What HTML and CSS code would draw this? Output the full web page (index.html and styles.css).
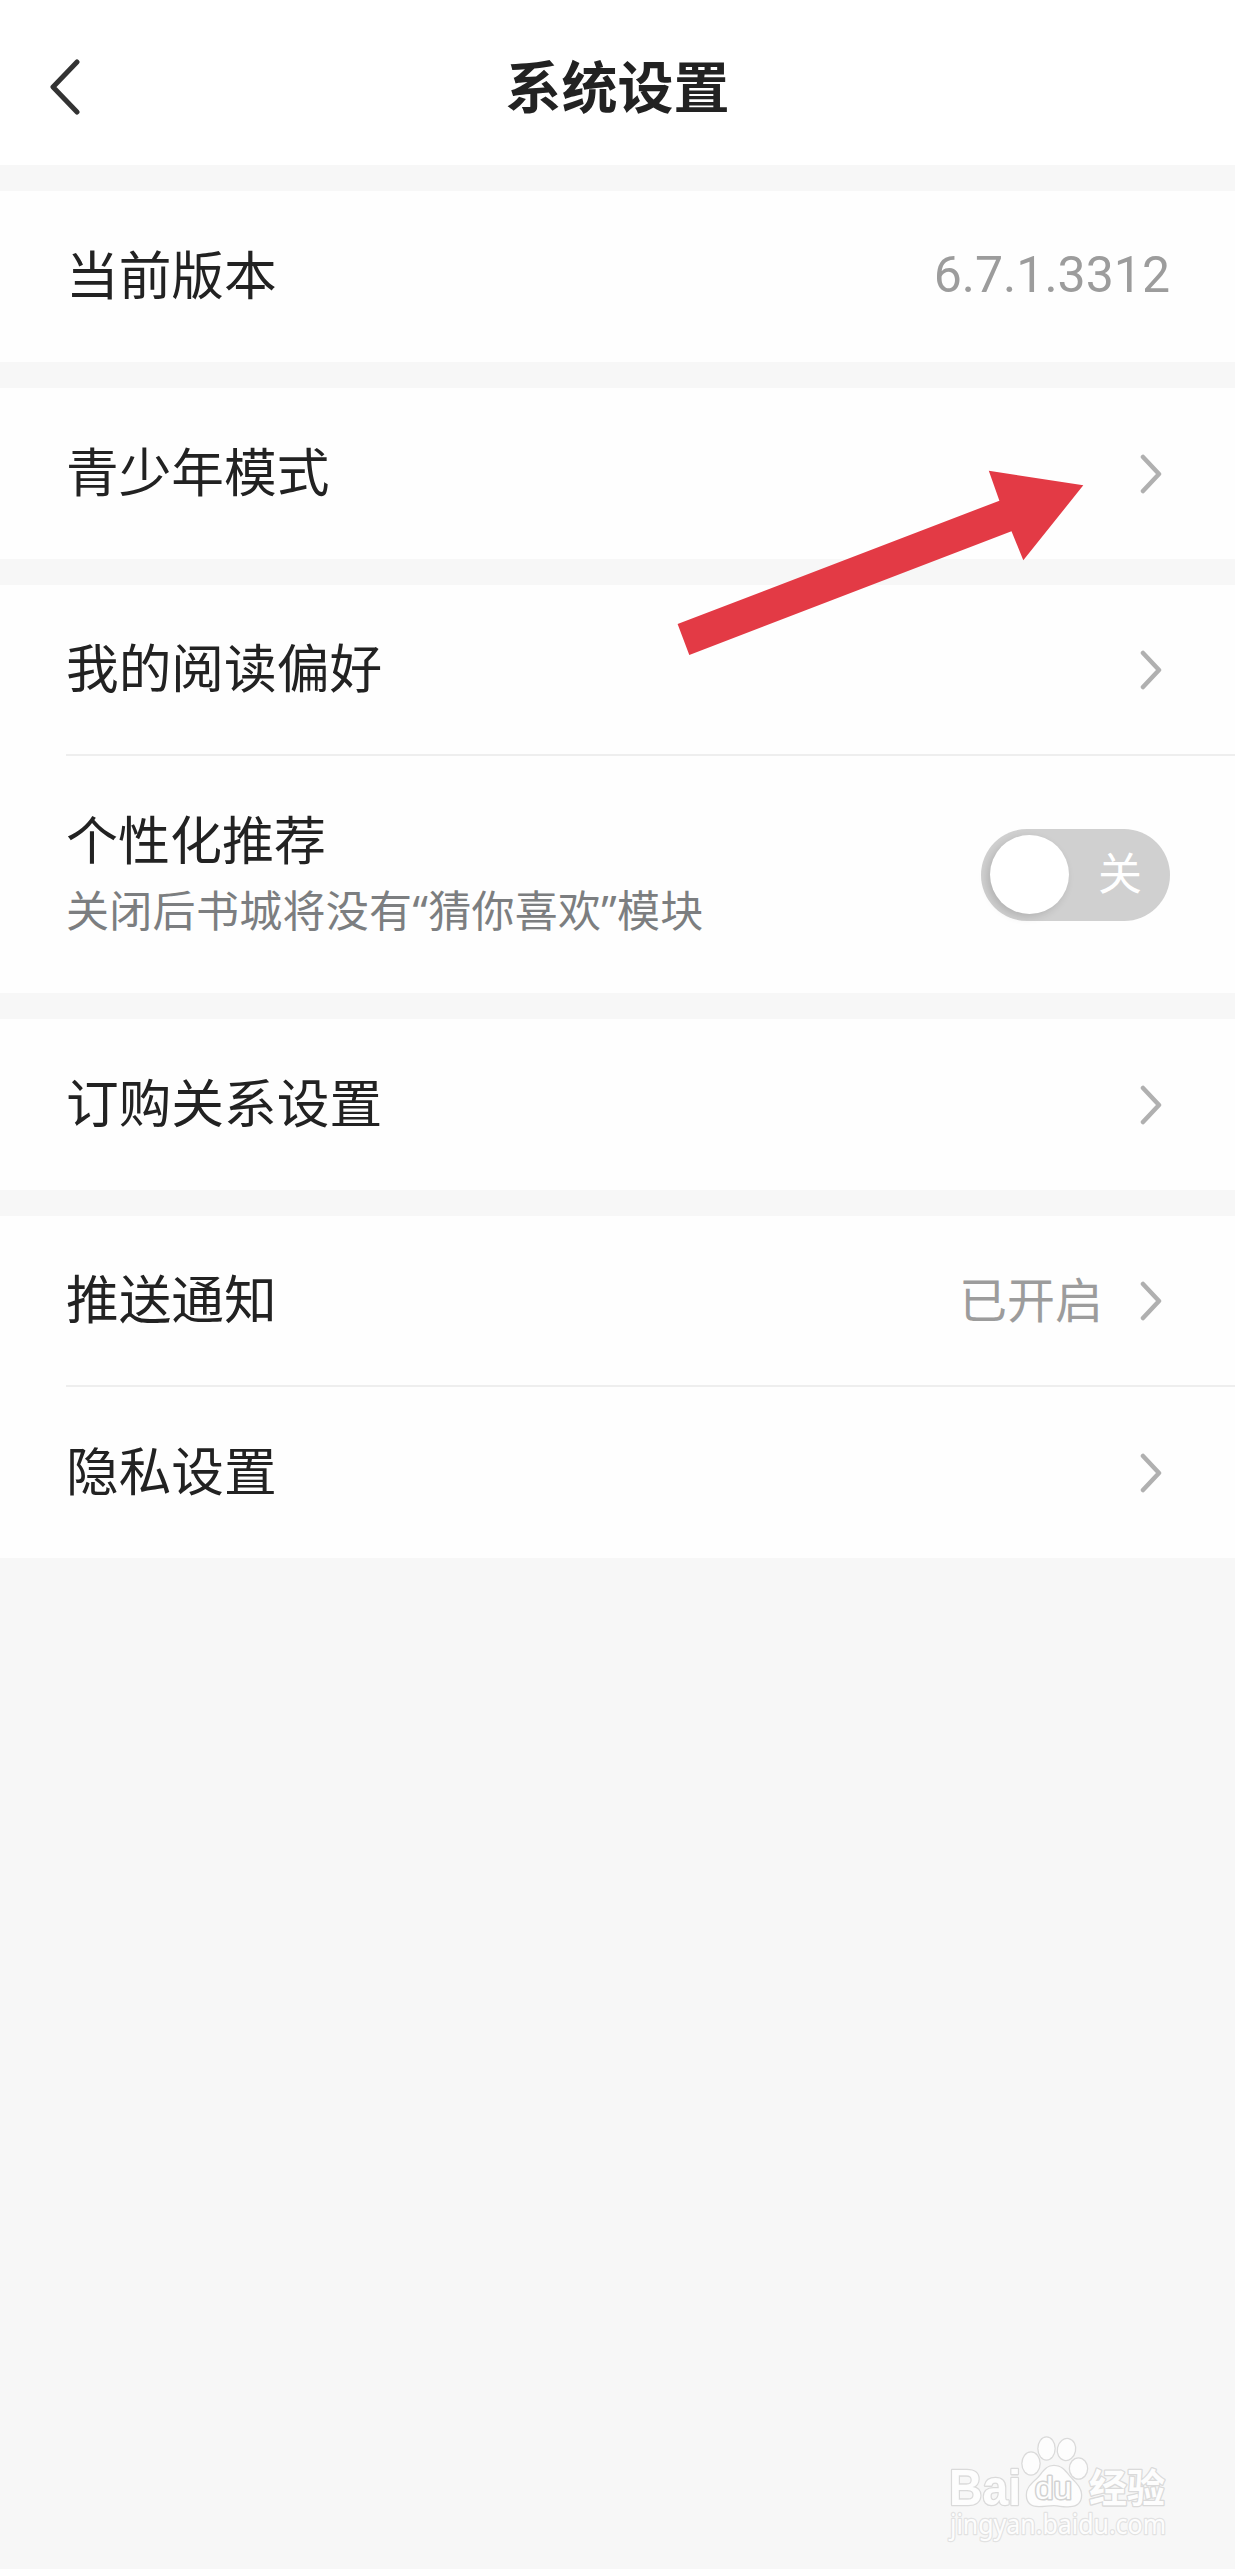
FILE: index.html
```html
<!DOCTYPE html>
<html lang="zh-CN">
<head>
<meta charset="utf-8">
<title>系统设置</title>
<link rel="stylesheet" href="styles.css">
</head>
<body>
<svg class="symbols" aria-hidden="true">
  <symbol id="chevron" viewBox="0 0 24 40"><path d="M5 3 21 20 5 37"/></symbol>
</svg>
<main class="screen">
  <header class="header">
    <svg class="back" viewBox="0 0 32 56"><path d="M29 3 5 28 29 53"/></svg>
    <h1 class="title">系统设置</h1>
  </header>

  <section class="group">
    <div class="row"><span class="label">当前版本</span><span class="version">6.7.1.3312</span></div>
  </section>

  <section class="group">
    <div class="row"><span class="label">青少年模式</span><svg class="chevron"><use href="#chevron"/></svg></div>
  </section>

  <section class="group">
    <div class="row row-first"><span class="label">我的阅读偏好</span><svg class="chevron"><use href="#chevron"/></svg></div>
    <div class="row row-tall">
      <div class="copy">
        <span class="label label-compact">个性化推荐</span>
        <span class="hint">关闭后书城将没有“猜你喜欢”模块</span>
      </div>
      <div class="toggle"><span class="knob"></span><span class="state">关</span></div>
    </div>
  </section>

  <section class="group">
    <div class="row"><span class="label">订购关系设置</span><svg class="chevron"><use href="#chevron"/></svg></div>
  </section>

  <section class="group">
    <div class="row row-first"><span class="label">推送通知</span><span class="status">已开启</span><svg class="chevron"><use href="#chevron"/></svg></div>
    <div class="row row-last"><span class="label">隐私设置</span><svg class="chevron"><use href="#chevron"/></svg></div>
  </section>

  <svg class="pointer" viewBox="677 470 407 186"><path d="M677.6 624 999.4 500.7 988.8 470.7 1083.3 485.3 1023.3 560.3 1011.5 531.3 689.3 655Z"/></svg>

  <svg class="watermark" viewBox="0 0 240 130">
    <g class="mark">
      <text class="brand" x="9" y="70.500" textLength="72" lengthAdjust="spacingAndGlyphs">Bai</text>
      <ellipse cx="91" cy="29.500" rx="8.500" ry="11"/>
      <ellipse cx="106.500" cy="14.500" rx="8" ry="11"/>
      <ellipse cx="126.500" cy="15.500" rx="8.500" ry="10.500" transform="rotate(12 126.500 15.500)"/>
      <ellipse cx="138.500" cy="34.500" rx="8.500" ry="10"/>
      <path d="M114 32C107 32 104 37 100 42 95 48 87 52 87 61 87 69 92 72 99 72 105 72 108 71 114 71 120 71 123 73 130 72 137 72 141 68 141 61 141 53 134 48 129 42 124 36 121 32 114 32Z"/>
      <text class="du" x="95" y="65" textLength="37" lengthAdjust="spacingAndGlyphs">du</text>
      <text class="cn" x="149" y="68" textLength="76" lengthAdjust="spacingAndGlyphs">经验</text>
      <text class="site" x="10" y="100" textLength="216" lengthAdjust="spacingAndGlyphs">jingyan.baidu.com</text>
    </g>
  </svg>
</main>
</body>
</html>
```
FILE: styles.css
```css
* { box-sizing: border-box; }
body {
  margin: 0;
  background: #f7f7f7;
  color: #222;
  font-family: "Noto Sans CJK SC", sans-serif;
}
.symbols { position: absolute; width: 0; height: 0; }
.screen {
  position: relative;
  height: 2569px;
  display: flex;
  flex-direction: column;
  gap: 26px;
}
.header {
  height: 165px;
  padding: 9px 0 0 48px;
  display: grid;
  grid-template-columns: 32px 1fr 80px;
  align-items: center;
  background: #fff;
}
.back { width: 32px; height: 56px; fill: none; stroke: #333; stroke-width: 5; stroke-linecap: round; stroke-linejoin: round; }
.title { margin: 0; padding-bottom: 7px; font-size: 56px; line-height: 80px; font-weight: 700; text-align: center; }
.group { background: #fefefe; }
.row {
  height: 171px;
  margin-left: 66px;
  padding-right: 65px;
  display: flex;
  align-items: center;
}
.row-first { height: 169px; }
.row + .row { border-top: 2px solid #eee; }
.row-tall { height: 239px; }
.row-last { height: 173px; }
.label { flex: 1; padding-bottom: 10px; font-size: 52.7px; line-height: 76px; }
.version { padding-bottom: 3px; font-family: Roboto, sans-serif; font-size: 50px; color: #9c9c9c; }
.status { margin-right: 35px; padding-bottom: 8px; font-size: 48px; line-height: 70px; color: #9c9c9c; }
.chevron { width: 24px; height: 40px; margin-right: 8px; fill: none; stroke: #b0b0b0; stroke-width: 4.5; stroke-linecap: round; stroke-linejoin: round; }
.copy { flex: 1; display: flex; flex-direction: column; padding-bottom: 7px; }
.label-compact { padding-bottom: 3px; font-size: 52px; }
.hint { font-family: "Noto Sans", "Noto Sans CJK SC", sans-serif; font-size: 43px; line-height: 64px; letter-spacing: .3px; color: #7c7e80; }
.toggle {
  width: 189px;
  height: 92px;
  padding: 0 28px 0 9px;
  display: flex;
  align-items: center;
  justify-content: space-between;
  border-radius: 46px;
  background: #d0d0d0;
}
.knob { width: 79px; height: 79px; border-radius: 50%; background: #fff; box-shadow: -3px 3px 8px rgba(0, 0, 0, .14); }
.state { padding-bottom: 7px; font-size: 44px; line-height: 60px; color: #fff; }
.pointer { position: absolute; left: 677px; top: 470px; width: 407px; height: 186px; fill: #e33a45; }
.watermark { position: absolute; left: 940px; top: 2434px; width: 240px; height: 130px; }
.mark { fill: #fdfdfd; stroke: #dadada; stroke-width: 2.6; stroke-linejoin: round; paint-order: stroke; }
.brand { font: 700 50px "Liberation Sans", sans-serif; }
.du { font: 32px "Liberation Sans", sans-serif; stroke: #d2d2d2; stroke-width: 3; }
.cn { font: 700 39px "Noto Sans CJK SC", sans-serif; }
.site { font: 27px "Noto Sans", sans-serif; stroke: #e2e2e2; stroke-width: 2.4; }
```
